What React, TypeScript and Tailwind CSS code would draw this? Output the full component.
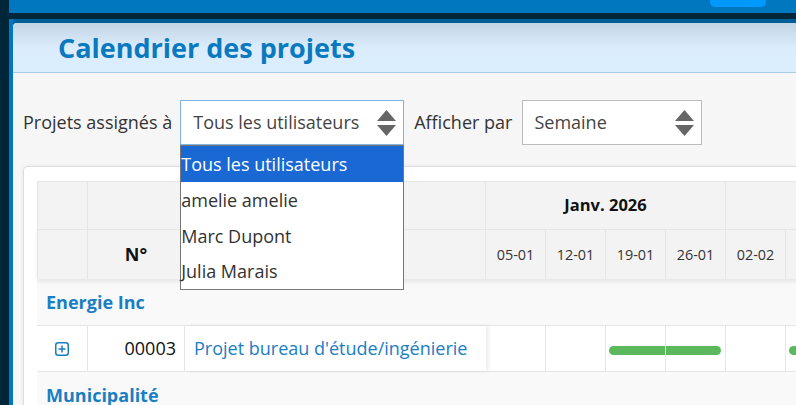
import React from "react";

const weeks = ["05-01", "12-01", "19-01", "26-01", "02-02", "09-02"];

function Arrows() {
  return (
    <svg width="19" height="26" viewBox="0 0 19 26" className="shrink-0">
      <path d="M9.5 0 L19 11 L0 11 Z" fill="#666" />
      <path d="M0 15 L19 15 L9.5 26 Z" fill="#666" />
    </svg>
  );
}

function PlusIcon() {
  return (
    <svg width="14" height="14" viewBox="0 0 14 14">
      <rect x="0.75" y="0.75" width="12.5" height="12.5" rx="2.5" fill="none" stroke="#1a7ec3" strokeWidth="1.5" />
      <path d="M7 3.5 V10.5 M3.5 7 H10.5" stroke="#1a7ec3" strokeWidth="1.5" />
    </svg>
  );
}

export default function App() {
  return (
    <div
      className="flex h-[405px] w-[796px] overflow-hidden bg-[#00263a]"
      style={{ fontFamily: '"Open Sans", "Liberation Sans", sans-serif' }}
    >
      <div className="w-[9px] shrink-0 bg-[#00263a]" />
      <div className="flex min-w-0 flex-1 flex-col">
        <div className="relative h-[13px] shrink-0 bg-[#0077be]">
          <div className="absolute left-[701px] top-0 h-[7px] w-[56px] rounded-b-[5px] bg-[#0099ff]" />
        </div>
        <div className="h-[6px] shrink-0 bg-[#00263a]" />
        <div className="flex min-h-0 flex-1 flex-col border-l-4 border-[#0077c0] bg-[#005e98] pt-[4px]">
          <div className="flex min-h-0 flex-1 flex-col overflow-hidden rounded-tl-[4px] bg-[#f6f6f6]">
            <div className="flex h-[50px] shrink-0 items-center border-b border-[#a6cde3] bg-gradient-to-b from-[#c3d5e5] via-[#dbedfc] to-[#dbeefd] pl-[45px]">
              <h1 className="text-[27px] font-bold leading-none text-[#0a79c0]">Calendrier des projets</h1>
            </div>
            <div className="flex items-center pl-[10px] pt-[27px] text-[18px] text-[#333]">
              <span className="mr-[8px]">Projets assignés à</span>
              <div className="relative">
                <div className="flex h-[45px] w-[224px] items-center justify-between border border-[#7fb2e5] bg-white pl-[12px] pr-[7px] text-[#444]">
                  <span>Tous les utilisateurs</span>
                  <Arrows />
                </div>
                <div className="absolute left-0 top-[45px] z-10 w-[224px] border border-[#767676] bg-white text-[18px] text-[#333]">
                  <div className="flex h-[36px] items-center bg-[#1a68d4] text-white">Tous les utilisateurs</div>
                  <div className="flex h-[36px] items-center">amelie amelie</div>
                  <div className="flex h-[36px] items-center">Marc Dupont</div>
                  <div className="flex h-[35px] items-center">Julia Marais</div>
                </div>
              </div>
              <span className="ml-[10px] mr-[10px]">Afficher par</span>
              <div className="flex h-[45px] w-[180px] items-center justify-between border border-[#bbb] bg-white pl-[11px] pr-[7px] text-[#444]">
                <span>Semaine</span>
                <Arrows />
              </div>
            </div>
            <div className="ml-[10px] mt-[21px] flex-1 rounded-tl-[5px] border border-r-0 border-b-0 border-[#dedede] bg-white pl-[13px] pt-[14px] shadow-[0_0_4px_rgba(0,0,0,0.06)]">
              <div className="w-[900px] text-[#111]">
                {/* header row 1 */}
                <div className="flex h-[48px] border-t border-[#e6e6e6] bg-[#f3f3f3]">
                  <div className="w-[51px] shrink-0 border-l border-r border-[#e6e6e6]" />
                  <div className="w-[398px] shrink-0 border-r border-[#e6e6e6]" />
                  <div className="flex w-[240px] shrink-0 items-center justify-center border-r border-[#e6e6e6] text-[16.5px] font-bold">
                    Janv. 2026
                  </div>
                  <div className="w-[200px] shrink-0" />
                </div>
                {/* header row 2 */}
                <div className="relative z-[1] flex h-[50px] border-t border-[#e6e6e6] bg-[#f3f3f3] shadow-[0_3px_4px_rgba(0,0,0,0.07)]">
                  <div className="w-[51px] shrink-0 border-l border-r border-[#e6e6e6]" />
                  <div className="flex w-[97px] shrink-0 items-center justify-center border-r border-[#e6e6e6] text-[18px] font-bold">
                    N°
                  </div>
                  <div className="w-[301px] shrink-0 border-r border-[#e6e6e6]" />
                  {weeks.map((w) => (
                    <div
                      key={w}
                      className="flex w-[60px] shrink-0 items-center justify-center border-r border-[#e6e6e6] text-[14.4px] text-[#333]"
                    >
                      {w}
                    </div>
                  ))}
                </div>
                {/* group row */}
                <div className="flex h-[46px] items-center bg-[#f9f9f9] pl-[9px] text-[18px] font-bold text-[#1a7ec3]">
                  Energie Inc
                </div>
                {/* project row */}
                <div className="flex h-[47px] border-b border-t border-[#e6e6e6] bg-white">
                  <div className="flex w-[51px] shrink-0 items-center justify-center border-r border-[#e6e6e6]">
                    <PlusIcon />
                  </div>
                  <div className="flex w-[97px] shrink-0 items-center justify-end border-r border-[#e6e6e6] pr-[8px] text-[18px] text-[#111]">
                    00003
                  </div>
                  <div className="relative z-[1] flex w-[301px] shrink-0 items-center bg-white pl-[9px] text-[18px] text-[#1a7ec3] shadow-[3px_0_4px_rgba(0,0,0,0.07)]">
                    Projet bureau d'étude/ingénierie
                  </div>
                  {weeks.map((w, i) => (
                    <div
                      key={w}
                      className="flex w-[60px] shrink-0 items-center border-r border-[#e6e6e6] pt-[3px]"
                    >
                      {i === 2 && <div className="ml-[3px] h-[9px] flex-1 rounded-l-full bg-[#5cb85c]" />}
                      {i === 3 && <div className="mr-[4px] h-[9px] flex-1 rounded-r-full bg-[#5cb85c]" />}
                      {i === 5 && <div className="ml-[3px] h-[9px] flex-1 rounded-l-full bg-[#5cb85c]" />}
                    </div>
                  ))}
                </div>
                <div className="flex h-[46px] items-center bg-[#f9f9f9] pl-[9px] text-[18px] font-bold text-[#1a7ec3]">
                  Municipalité
                </div>
              </div>
            </div>
          </div>
        </div>
      </div>
    </div>
  );
}
